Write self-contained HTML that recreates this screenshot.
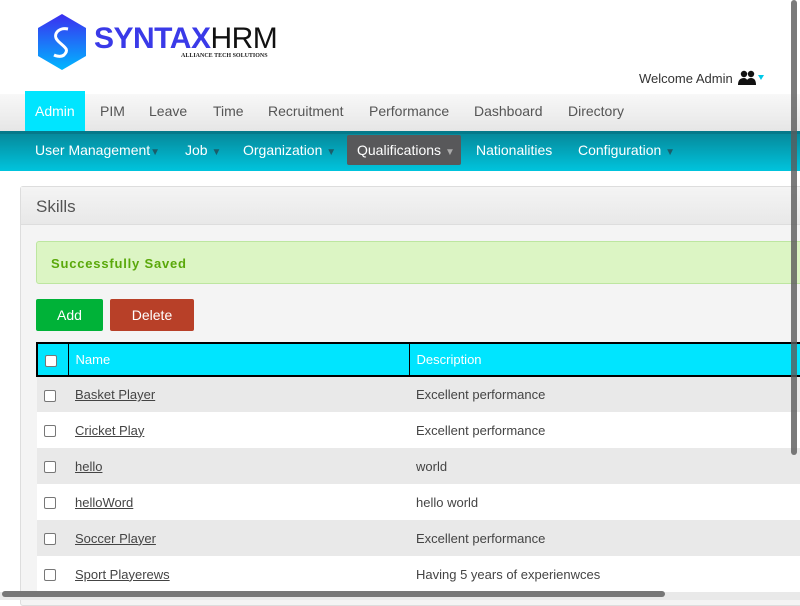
<!DOCTYPE html>
<html><head><style>
*{margin:0;padding:0;box-sizing:border-box}
body{width:800px;height:600px;overflow:hidden;background:#fff;font-family:"Liberation Sans",Arial,sans-serif;position:relative}
.abs{position:absolute}
.top a{position:absolute;top:103px;font-size:14px;color:#555}
.sub span{position:absolute;top:142px;font-size:14px;color:#fff}
.sub span.tri{position:static;font-size:10px;color:#1b5d6a}
td{font-size:13px;color:#444;height:36px;padding-left:7px}
a.l{color:#444;text-decoration:underline}
.cb{display:inline-block;width:12px;height:12px;border:1px solid #777;border-radius:2px;background:#fff;vertical-align:middle}
</style></head><body>
<svg class="abs" style="left:36px;top:13px" width="52" height="58" viewBox="0 0 52 58"><defs><linearGradient id="g" x1="0" y1="0" x2="0" y2="1"><stop offset="0" stop-color="#3b2ef0"/><stop offset="1" stop-color="#00b8ff"/></linearGradient></defs><polygon points="26,1 50,15 50,43 26,57 2,43 2,15" fill="url(#g)"/><path d="M32 16 C22 14 16 22 22 28 C28 34 34 36 28 42 C24 45 18 42 18 42" stroke="#fff" stroke-width="3" fill="none"/></svg>
<div class="abs" style="left:94px;top:22px;font-size:30px;font-weight:bold;letter-spacing:-0.5px;color:#3a3ae8">SYNTAX<span style="color:#111;font-weight:normal">HRM</span></div>
<div class="abs" style="left:181px;top:53px;font-size:6px;font-weight:bold;color:#222;font-family:'Liberation Serif',serif">ALLIANCE TECH SOLUTIONS</div>
<div class="abs" style="left:639px;top:71px;font-size:13px;color:#333">Welcome Admin</div>
<svg class="abs" style="left:738px;top:70px" width="28" height="16" viewBox="0 0 28 16"><circle cx="6" cy="4" r="3.2" fill="#111"/><circle cx="13" cy="4" r="3.2" fill="#111"/><path d="M0 15 Q0 8 6 8 Q10 8 10 15Z M8 15 Q8 8 13 8 Q18 8 18 15Z" fill="#111"/><path d="M20 5 L26 5 L23 10Z" fill="#00c8e8"/></svg>
<div class="abs" style="left:0;top:94px;width:800px;height:37px;background:linear-gradient(#f8f8f8,#e6e6e6)"></div>
<div class="abs" style="left:25px;top:91px;width:60px;height:40px;background:#00e5ff"></div>
<div class="top"><a style="left:35px;color:#fff">Admin</a><a style="left:100px">PIM</a><a style="left:149px">Leave</a><a style="left:213px">Time</a><a style="left:268px">Recruitment</a><a style="left:369px">Performance</a><a style="left:474px">Dashboard</a><a style="left:568px">Directory</a></div>
<div class="abs" style="left:0;top:131px;width:800px;height:40px;background:linear-gradient(#068a9c,#00c4dd);border-top:3px solid #05798a"></div>
<div class="abs" style="left:347px;top:135px;width:114px;height:30px;background:#58585a;border-radius:2px"></div>
<div class="sub"><span style="left:35px">User Management<span class="tri">▼</span></span><span style="left:185px">Job <span class="tri">▼</span></span><span style="left:243px">Organization <span class="tri">▼</span></span><span style="left:357px">Qualifications <span class="tri" style="color:#aaa">▼</span></span><span style="left:476px">Nationalities</span><span style="left:578px">Configuration <span class="tri">▼</span></span></div>
<div class="abs" style="left:20px;top:186px;width:800px;height:420px;background:#f4f4f4;border:1px solid #ddd;border-radius:3px"></div>
<div class="abs" style="left:21px;top:187px;width:800px;height:38px;background:linear-gradient(#f4f4f4,#e8e8e8);border-bottom:1px solid #ddd"></div>
<div class="abs" style="left:36px;top:197px;font-size:17px;color:#555">Skills</div>
<div class="abs" style="left:36px;top:241px;width:780px;height:43px;background:#dcf5c4;border:1px solid #bde6a0;border-radius:3px"></div>
<div class="abs" style="left:51px;top:256px;font-size:13px;font-weight:bold;color:#5aa80a;letter-spacing:0.8px">Successfully Saved</div>
<div class="abs" style="left:36px;top:299px;width:67px;height:32px;background:#00b238;border-radius:2px;color:#fff;font-size:14px;text-align:center;line-height:32px">Add</div>
<div class="abs" style="left:110px;top:299px;width:84px;height:32px;background:#b84028;border-radius:2px;color:#fff;font-size:14px;text-align:center;line-height:32px">Delete</div>
<table class="abs" style="left:36px;top:342px;width:780px;border-collapse:collapse">
<tr style="background:#00e5ff"><td style="width:31px;height:33px;border:2px solid #000;border-right:1px solid #000"><span class="cb"></span></td><td style="width:341px;height:33px;color:#fff;border-top:2px solid #000;border-bottom:2px solid #000;border-right:1px solid #000">Name</td><td style="height:33px;color:#fff;border-top:2px solid #000;border-bottom:2px solid #000">Description</td></tr>
<tr style="background:#e9e9e9"><td><span class="cb"></span></td><td><a class="l">Basket Player</a></td><td>Excellent performance</td></tr>
<tr style="background:#fff"><td><span class="cb"></span></td><td><a class="l">Cricket Play</a></td><td>Excellent performance</td></tr>
<tr style="background:#e9e9e9"><td><span class="cb"></span></td><td><a class="l">hello</a></td><td>world</td></tr>
<tr style="background:#fff"><td><span class="cb"></span></td><td><a class="l">helloWord</a></td><td>hello world</td></tr>
<tr style="background:#e9e9e9"><td><span class="cb"></span></td><td><a class="l">Soccer Player</a></td><td>Excellent performance</td></tr>
<tr style="background:#fff"><td><span class="cb"></span></td><td><a class="l">Sport Playerews</a></td><td>Having 5 years of experienwces</td></tr>
</table>
<div class="abs" style="left:0;top:592px;width:800px;height:8px;background:#e9e9e9"></div>
<div class="abs" style="left:2px;top:591px;width:663px;height:6px;background:#777;border-radius:3px"></div>
<div class="abs" style="left:791px;top:0;width:6px;height:455px;background:rgba(90,90,90,0.8);border-radius:3px"></div>
</body></html>
